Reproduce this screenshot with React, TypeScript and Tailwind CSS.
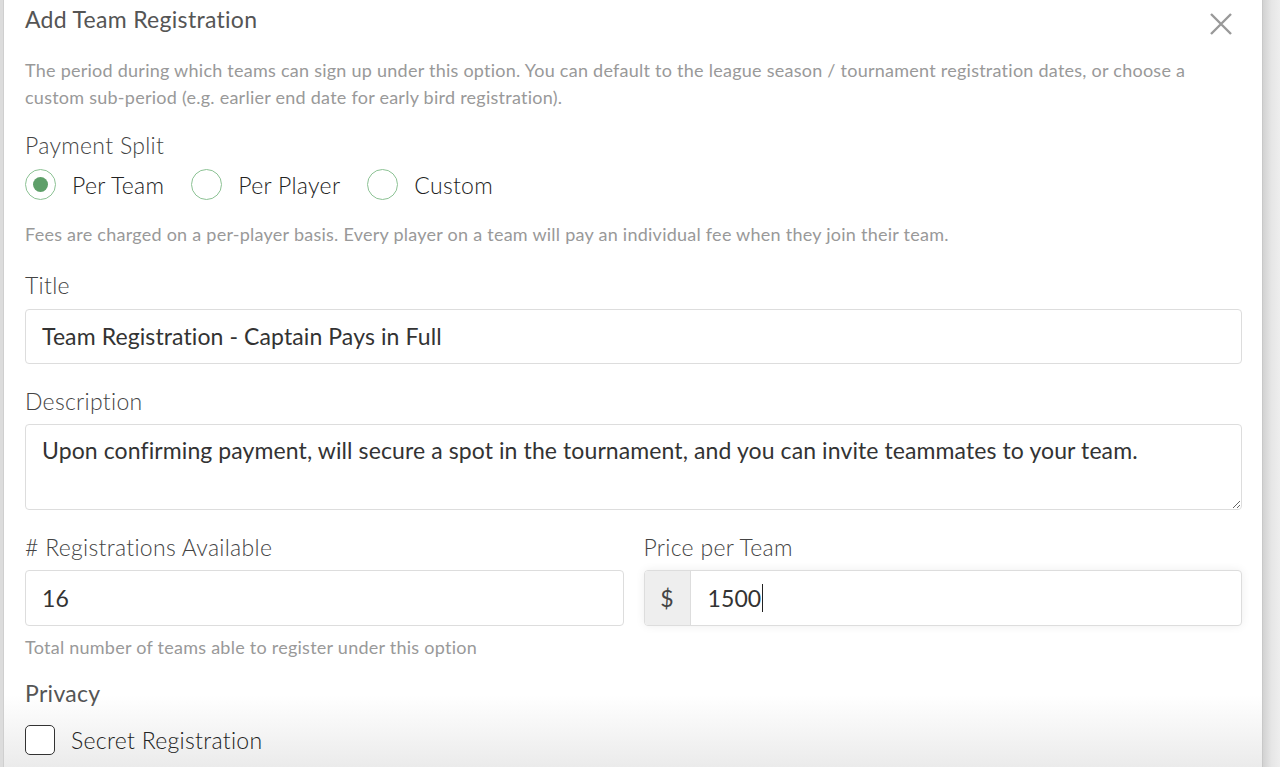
import React from 'react';

const label = "block text-[23px] leading-[30px] tracking-[0.3px] font-light text-[#444]";
const help = "text-[18px] leading-[27px] tracking-[0.25px] text-[#999]";
const value = "text-[23px] tracking-[0.1px] text-[#333]";

const Radio = ({ checked, text }: { checked?: boolean; text: string }) => (
  <label className="flex items-center">
    <span className="w-[31px] h-[31px] rounded-full border border-[#8cc294] bg-white flex items-center justify-center">
      {checked && <span className="w-[15px] h-[15px] rounded-full bg-[#5e9f69]" />}
    </span>
    <span className="ml-[16px] text-[23px] leading-[30px] tracking-[0.3px] font-light text-[#222]">{text}</span>
  </label>
);

export default function App() {
  return (
    <div className="flex h-[767px] w-[1280px] overflow-hidden bg-[#e2e2e2] font-['Lato','Liberation_Sans',sans-serif]">
      <div className="w-[4px] bg-[#dcdcdc] border-r border-[#cfcfcf]" />

      <div className="flex-1 bg-[linear-gradient(to_bottom,#ffffff_695px,#ebebeb)] pl-[21px] pr-[20px] pt-[4px]">
        <div className="flex items-start justify-between">
          <h2 className="text-[23px] leading-[30px] tracking-[0.3px] font-normal text-[#555]">Add Team Registration</h2>
          <button className="mt-[9px] mr-[10px] text-[#999]" aria-label="Close">
            <svg width="22" height="22" viewBox="0 0 22 22" fill="none" stroke="currentColor" strokeWidth="2.4">
              <path d="M1 1 L21 21 M21 1 L1 21" />
            </svg>
          </button>
        </div>

        <p className={`${help} mt-[22px]`}>
          The period during which teams can sign up under this option. You can default to the league season / tournament registration dates, or choose a custom sub-period (e.g. earlier end date for early bird registration).
        </p>

        <span className={`${label} mt-[19px]`}>Payment Split</span>
        <div className="mt-[9px] flex items-center gap-[27px]">
          <Radio checked text="Per Team" />
          <Radio text="Per Player" />
          <Radio text="Custom" />
        </div>

        <p className={`${help} mt-[21px]`}>
          Fees are charged on a per-player basis. Every player on a team will pay an individual fee when they join their team.
        </p>

        <span className={`${label} mt-[22px]`}>Title</span>
        <div className={`mt-[9px] h-[55px] rounded-[4px] border border-[#ddd] bg-white px-[16px] flex items-center ${value}`}>
          Team Registration - Captain Pays in Full
        </div>

        <span className={`${label} mt-[22px]`}>Description</span>
        <textarea
          readOnly
          className={`mt-[8px] block w-full h-[86px] rounded-[4px] border border-[#ddd] bg-white px-[16px] pt-[10px] leading-[30px] outline-none ${value}`}
          defaultValue="Upon confirming payment, will secure a spot in the tournament, and you can invite teammates to your team."
        />

        <div className="mt-[22px] grid grid-cols-2 gap-x-[20px]">
          <div>
            <span className={label}>&#35; Registrations Available</span>
            <div className={`mt-[8px] h-[56px] rounded-[4px] border border-[#ddd] bg-white px-[16px] flex items-center ${value}`}>
              16
            </div>
            <p className={`${help} mt-[8px]`}>Total number of teams able to register under this option</p>
          </div>
          <div>
            <span className={label}>Price per Team</span>
            <div className="mt-[8px] h-[56px] rounded-[4px] border border-[#ddd] bg-white flex shadow-[0_0_10px_rgba(0,0,0,0.07)] overflow-hidden">
              <span className="w-[46px] bg-[#eee] border-r border-[#ddd] flex items-center justify-center text-[23px] text-[#444]">$</span>
              <span className={`flex items-center pl-[17px] ${value}`}>
                1500<span className="ml-[1px] w-[1px] h-[28px] bg-[#222]" />
              </span>
            </div>
          </div>
        </div>

        <span className="block mt-[17px] text-[23px] leading-[30px] tracking-[0.3px] text-[#555]">Privacy</span>
        <label className="mt-[17px] flex items-center">
          <span className="w-[30px] h-[30px] rounded-[5px] border border-[#333] bg-white" />
          <span className="ml-[16px] text-[23px] leading-[30px] tracking-[0.3px] font-light text-[#222]">Secret Registration</span>
        </label>
      </div>

      <div className="w-[18px] bg-linear-to-r from-[#d2d2d2] via-[#e6e6e6] to-[#eeeeee] border-l border-[#c8c8c8]" />
    </div>
  );
}
